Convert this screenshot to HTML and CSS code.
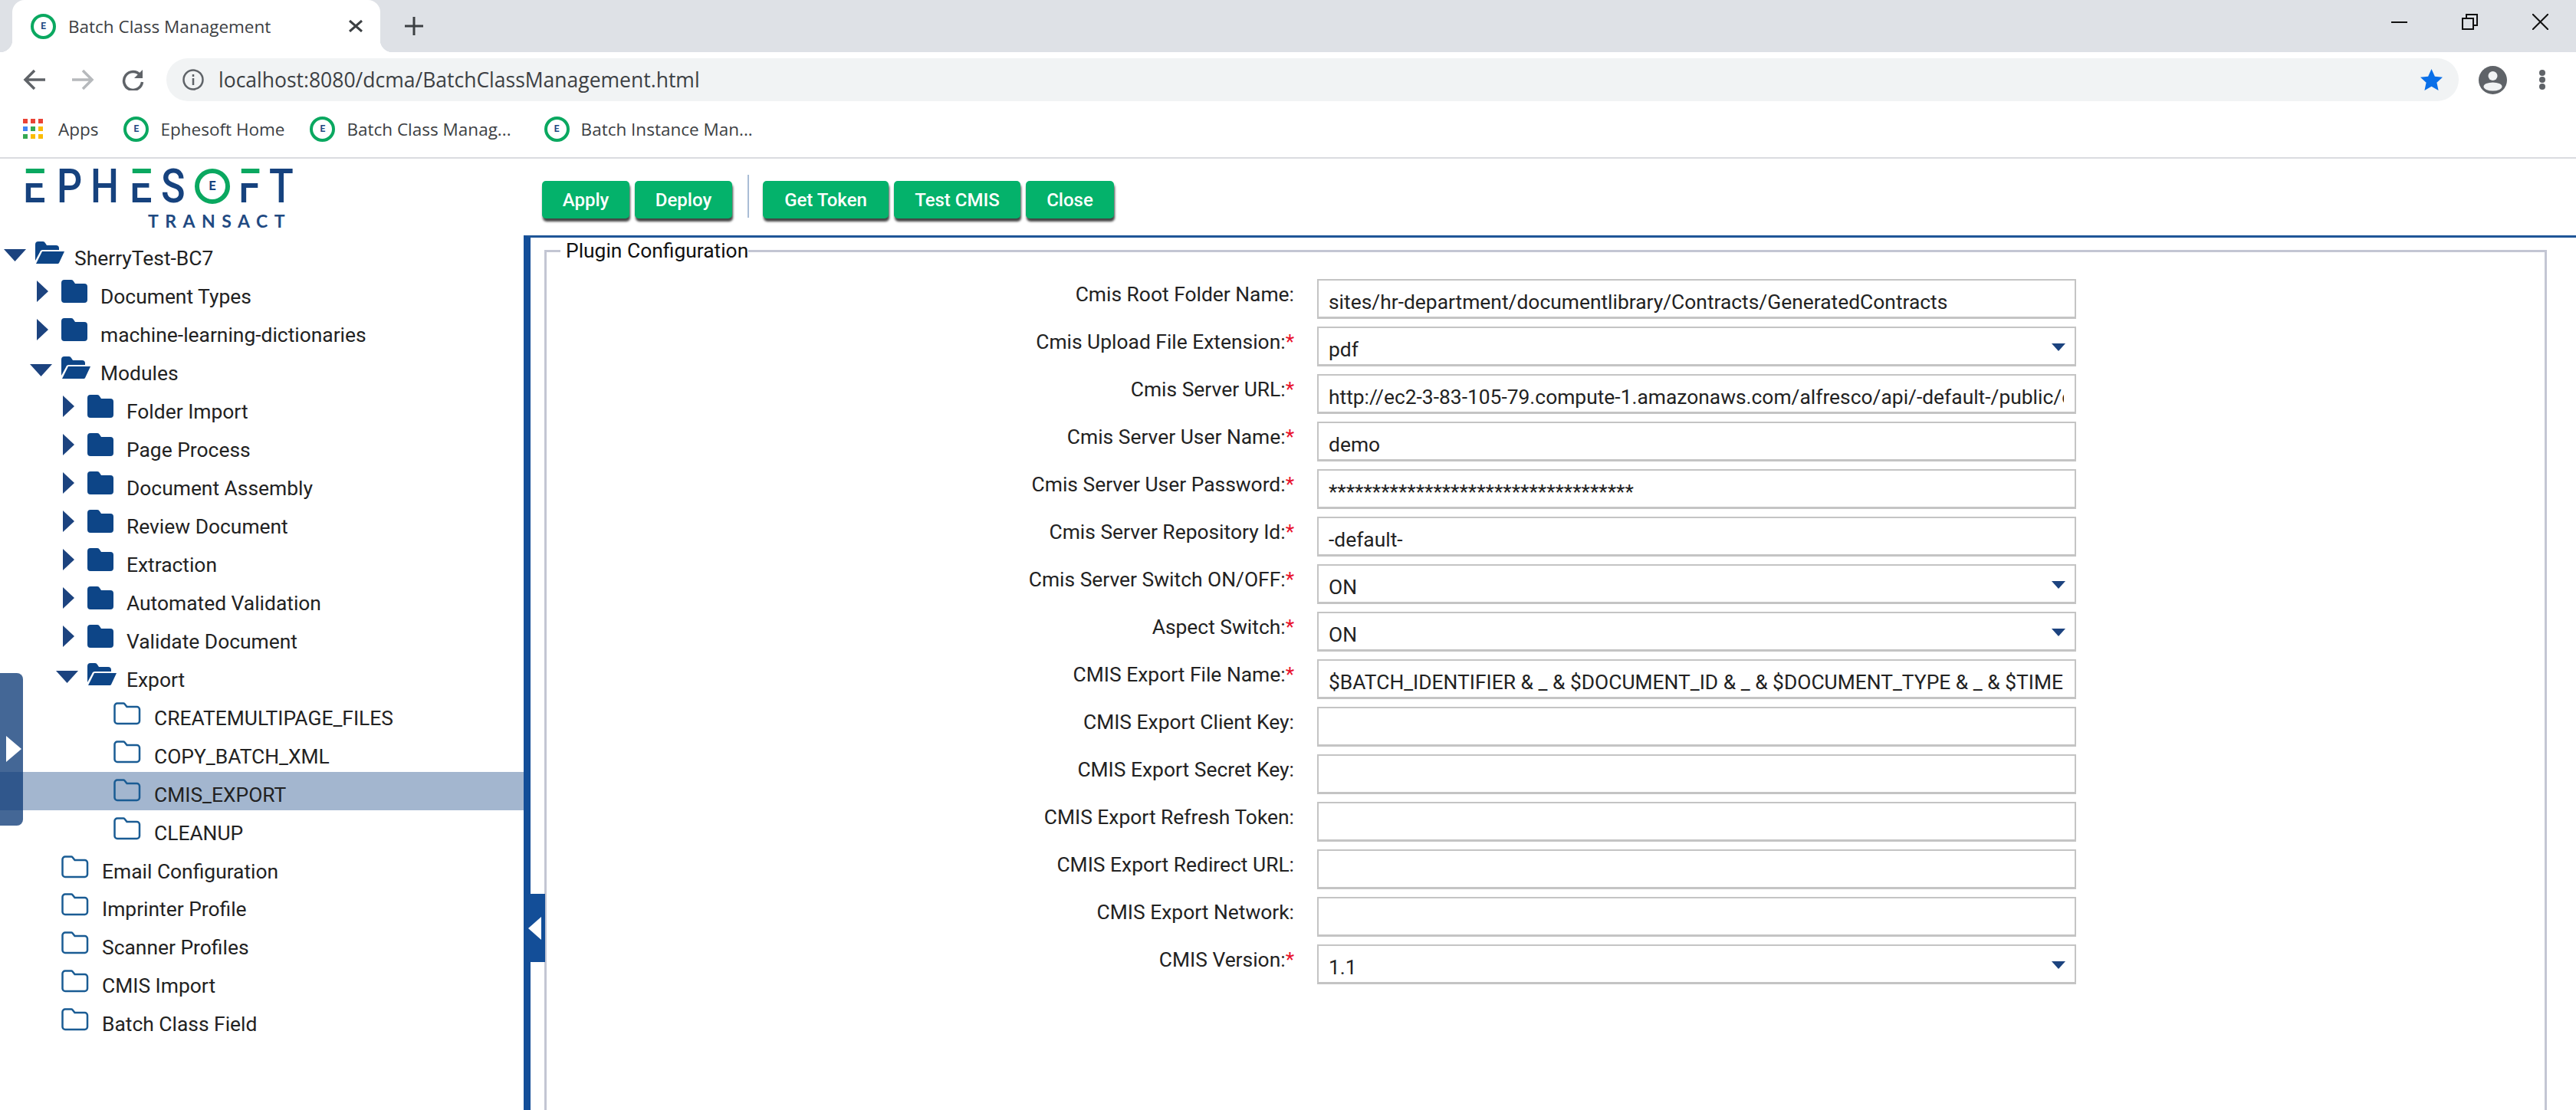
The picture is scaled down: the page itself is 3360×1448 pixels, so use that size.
FILE: index.html
```html
<!DOCTYPE html>
<html lang="en">
<head>
    <meta charset="UTF-8">
    <title>Batch Class Management</title>
    <link rel="stylesheet" href="styles.css">
</head>
<body>
    <svg class="defs" width="0" height="0">
        <symbol id="folder" viewBox="0 0 34 30"><path d="M4 0h9a4 4 0 0 1 3 2l2 3h12a4 4 0 0 1 4 4v17a4 4 0 0 1-4 4H4a4 4 0 0 1-4-4V4a4 4 0 0 1 4-4z"/></symbol>
        <symbol id="folder-open" viewBox="0 0 38 30"><path d="M0 25V4a4 4 0 0 1 4-4h6a4 4 0 0 1 3 2l2 3h12a4 4 0 0 1 4 4v2H10a4 4 0 0 0-4 3z"/><path d="M9 13h29l-7 15a2 2 0 0 1-2 1H1z"/></symbol>
        <symbol id="folder-line" viewBox="0 0 36 30"><path d="M5 1.5h8a2 2 0 0 1 1.500.7l3 3.800h13a3.500 3.500 0 0 1 3.500 3.500v15a3.500 3.500 0 0 1-3.500 3.500H5a3.500 3.500 0 0 1-3.500-3.500V5A3.500 3.500 0 0 1 5 1.500z"/></symbol>
        <symbol id="caret-right" viewBox="0 0 15 28"><path d="M0 0l15 14L0 28z"/></symbol>
        <symbol id="caret-down" viewBox="0 0 29 16"><path d="M0 0h29L14.500 16z"/></symbol>
    </svg>

    <!-- browser chrome -->
    <div class="tabstrip">
        <div class="tab">
            <span class="favicon">E</span>
            <span class="tab-title">Batch Class Management</span>
            <svg class="tab-close" width="18" height="16" viewBox="0 0 18 16"><path d="M1 1l16 14M17 1L1 15"/></svg>
        </div>
        <svg class="new-tab" width="24" height="24" viewBox="0 0 24 24"><path d="M12 0v24M0 12h24"/></svg>
        <div class="window-controls">
            <svg width="21" height="21" viewBox="0 0 21 21"><path d="M0 11h21"/></svg>
            <svg width="21" height="21" viewBox="0 0 21 21"><path d="M1 6h14v14H1zM6 6V1h14v14h-5"/></svg>
            <svg width="21" height="21" viewBox="0 0 21 21"><path d="M0 0l21 21M21 0L0 21"/></svg>
        </div>
    </div>

    <div class="toolbar">
        <svg class="nav-icon" width="29" height="28" viewBox="0 0 29 28"><path d="M29 14H4M15 2L3 14l12 12"/></svg>
        <svg class="nav-icon is-off" width="29" height="28" viewBox="0 0 29 28"><path d="M0 14h25M14 2l12 12-12 12"/></svg>
        <svg class="nav-icon" width="29" height="28" viewBox="0 0 29 28"><path d="M24 8a12 12 0 1 0 2.500 9"/><path class="solid" d="M27 1v11H16z"/></svg>
        <div class="omnibox">
            <svg class="info-icon" width="28" height="28" viewBox="0 0 28 28"><circle cx="14" cy="14" r="12.500"/><path d="M14 12v9M14 7v3"/></svg>
            <span class="url">localhost:8080/dcma/BatchClassManagement.html</span>
            <svg class="star-icon" width="29" height="28" viewBox="0 0 29 28"><path d="M14.500 0l4.400 9.800 10.100 1-7.600 7 2.200 10.200-9.100-5.300L5.400 28l2.200-10.200L0 10.800l10.100-1z"/></svg>
        </div>
        <svg class="avatar" width="37" height="37" viewBox="0 0 37 37"><circle cx="18.500" cy="18.500" r="18.500"/><circle class="hole" cx="18.500" cy="13" r="6"/><ellipse class="hole" cx="18.500" cy="27" rx="12" ry="5.500"/></svg>
        <div class="dots"><i></i><i></i><i></i></div>
    </div>

    <div class="bookmarks">
        <div class="bookmark apps">
            <svg width="27" height="27" viewBox="0 0 27 27">
                <rect width="6" height="6" fill="#ea4335"/><rect x="10" width="6" height="6" fill="#ea4335"/><rect x="20" width="6" height="6" fill="#ea4335"/>
                <rect y="10" width="6" height="6" fill="#4285f4"/><rect x="10" y="10" width="6" height="6" fill="#34a853"/><rect x="20" y="10" width="6" height="6" fill="#fbbc05"/>
                <rect y="20" width="6" height="6" fill="#34a853"/><rect x="10" y="20" width="6" height="6" fill="#fbbc05"/><rect x="20" y="20" width="6" height="6" fill="#fbbc05"/>
            </svg>
            <span>Apps</span>
        </div>
        <div class="bookmark"><span class="favicon">E</span><span>Ephesoft Home</span></div>
        <div class="bookmark"><span class="favicon">E</span><span>Batch Class Manag...</span></div>
        <div class="bookmark"><span class="favicon">E</span><span>Batch Instance Man...</span></div>
    </div>

    <!-- application -->
    <div class="app">
        <aside class="sidebar">
            <div class="logo">
                <div class="logo-word">
                    <span class="two-tone">E</span><span>P</span><span>H</span><span class="two-tone">E</span><span>S</span><span class="logo-ring">E</span><span class="two-tone">F</span><span>T</span>
                </div>
                <div class="logo-sub">TRANSACT</div>
            </div>
            <ul class="tree">
                <li class="node l0"><svg class="caret down"><use href="#caret-down"/></svg><svg class="ficon open"><use href="#folder-open"/></svg><span>SherryTest-BC7</span></li>
                <li class="node l1"><svg class="caret"><use href="#caret-right"/></svg><svg class="ficon"><use href="#folder"/></svg><span>Document Types</span></li>
                <li class="node l1"><svg class="caret"><use href="#caret-right"/></svg><svg class="ficon"><use href="#folder"/></svg><span>machine-learning-dictionaries</span></li>
                <li class="node l1"><svg class="caret down"><use href="#caret-down"/></svg><svg class="ficon open"><use href="#folder-open"/></svg><span>Modules</span></li>
                <li class="node l2"><svg class="caret"><use href="#caret-right"/></svg><svg class="ficon"><use href="#folder"/></svg><span>Folder Import</span></li>
                <li class="node l2"><svg class="caret"><use href="#caret-right"/></svg><svg class="ficon"><use href="#folder"/></svg><span>Page Process</span></li>
                <li class="node l2"><svg class="caret"><use href="#caret-right"/></svg><svg class="ficon"><use href="#folder"/></svg><span>Document Assembly</span></li>
                <li class="node l2"><svg class="caret"><use href="#caret-right"/></svg><svg class="ficon"><use href="#folder"/></svg><span>Review Document</span></li>
                <li class="node l2"><svg class="caret"><use href="#caret-right"/></svg><svg class="ficon"><use href="#folder"/></svg><span>Extraction</span></li>
                <li class="node l2"><svg class="caret"><use href="#caret-right"/></svg><svg class="ficon"><use href="#folder"/></svg><span>Automated Validation</span></li>
                <li class="node l2"><svg class="caret"><use href="#caret-right"/></svg><svg class="ficon"><use href="#folder"/></svg><span>Validate Document</span></li>
                <li class="node l2"><svg class="caret down"><use href="#caret-down"/></svg><svg class="ficon open"><use href="#folder-open"/></svg><span>Export</span></li>
                <li class="node l3"><svg class="ficon leaf"><use href="#folder-line"/></svg><span>CREATEMULTIPAGE_FILES</span></li>
                <li class="node l3"><svg class="ficon leaf"><use href="#folder-line"/></svg><span>COPY_BATCH_XML</span></li>
                <li class="node l3 selected"><svg class="ficon leaf"><use href="#folder-line"/></svg><span>CMIS_EXPORT</span></li>
                <li class="node l3"><svg class="ficon leaf"><use href="#folder-line"/></svg><span>CLEANUP</span></li>
                <li class="node l1"><svg class="ficon leaf"><use href="#folder-line"/></svg><span>Email Configuration</span></li>
                <li class="node l1"><svg class="ficon leaf"><use href="#folder-line"/></svg><span>Imprinter Profile</span></li>
                <li class="node l1"><svg class="ficon leaf"><use href="#folder-line"/></svg><span>Scanner Profiles</span></li>
                <li class="node l1"><svg class="ficon leaf"><use href="#folder-line"/></svg><span>CMIS Import</span></li>
                <li class="node l1"><svg class="ficon leaf"><use href="#folder-line"/></svg><span>Batch Class Field</span></li>
            </ul>
            <div class="side-handle"><i></i></div>
        </aside>

        <main class="main">
            <div class="actions">
                <button class="btn-apply">Apply</button>
                <button class="btn-deploy">Deploy</button>
                <span class="separator"></span>
                <button class="btn-token">Get Token</button>
                <button class="btn-test">Test CMIS</button>
                <button class="btn-close">Close</button>
            </div>
            <div class="content">
                <div class="collapse-handle"><i></i></div>
                <fieldset class="config">
                    <legend>Plugin Configuration</legend>
                    <form class="config-form">
                        <label>Cmis Root Folder Name:</label>
                        <input type="text" value="sites/hr-department/documentlibrary/Contracts/GeneratedContracts">

                        <label>Cmis Upload File Extension:<b>*</b></label>
                        <div class="select"><select><option>pdf</option></select></div>

                        <label>Cmis Server URL:<b>*</b></label>
                        <input type="text" value="http://ec2-3-83-105-79.compute-1.amazonaws.com/alfresco/api/-default-/public/cmis/versions/1.1/atom">

                        <label>Cmis Server User Name:<b>*</b></label>
                        <input type="text" value="demo">

                        <label>Cmis Server User Password:<b>*</b></label>
                        <input type="text" value="***********************************">

                        <label>Cmis Server Repository Id:<b>*</b></label>
                        <input type="text" value="-default-">

                        <label>Cmis Server Switch ON/OFF:<b>*</b></label>
                        <div class="select"><select><option>ON</option></select></div>

                        <label>Aspect Switch:<b>*</b></label>
                        <div class="select"><select><option>ON</option></select></div>

                        <label>CMIS Export File Name:<b>*</b></label>
                        <input type="text" value="$BATCH_IDENTIFIER &amp; _ &amp; $DOCUMENT_ID &amp; _ &amp; $DOCUMENT_TYPE &amp; _ &amp; $TIME">

                        <label>CMIS Export Client Key:</label>
                        <input type="text">

                        <label>CMIS Export Secret Key:</label>
                        <input type="text">

                        <label>CMIS Export Refresh Token:</label>
                        <input type="text">

                        <label>CMIS Export Redirect URL:</label>
                        <input type="text">

                        <label>CMIS Export Network:</label>
                        <input type="text">

                        <label>CMIS Version:<b>*</b></label>
                        <div class="select"><select><option>1.1</option></select></div>
                    </form>
                </fieldset>
            </div>
        </main>
    </div>
</body>
</html>
```

FILE: styles.css
```css
* { box-sizing: border-box; }
html, body { margin: 0; height: 100%; }
body { width: 3360px; height: 1448px; overflow: hidden; background: white; color: #222; font-family: Roboto, "Liberation Sans", sans-serif; font-size: 26.4px; }
.defs { position: absolute; }

/* browser chrome */
.tabstrip { display: flex; align-items: center; height: 68px; padding-left: 16px; background: #dee1e6; }
.tab { position: relative; display: flex; align-items: center; align-self: stretch; width: 480px; padding: 0 23px 0 24px; background: white; border-radius: 16px 16px 0 0; }
.tab::before, .tab::after { content: ""; position: absolute; bottom: 0; width: 16px; height: 16px; }
.tab::before { right: 100%; background: radial-gradient(circle at 0 0, transparent 16px, white 16.5px); }
.tab::after { left: 100%; background: radial-gradient(circle at 100% 0, transparent 16px, white 16.5px); }
.favicon { display: flex; flex: none; align-items: center; justify-content: center; width: 33px; height: 33px; border: 4px solid #0aa860; border-radius: 50%; color: #1f4a82; font-family: Roboto, sans-serif; font-size: 12px; font-weight: 700; }
.tab-title { margin-left: 16px; color: #3c4043; font-family: "Open Sans", sans-serif; font-size: 22.5px; }
.tab-close { margin-left: auto; fill: none; stroke: #3c4043; stroke-width: 3; }
.new-tab { margin-left: 32px; fill: none; stroke: #3c4043; stroke-width: 3; }
.window-controls { display: flex; gap: 71px; margin-left: auto; padding-right: 36px; margin-top: -12px; }
.window-controls svg { fill: none; stroke: #111; stroke-width: 2; }

.toolbar { display: flex; align-items: center; height: 72px; padding: 0 40px 0 30px; }
.nav-icon { flex: none; margin-right: 35px; fill: none; stroke: #5f6368; stroke-width: 3.5; }
.nav-icon.is-off { stroke: #b6b9bc; margin-right: 36px; }
.nav-icon:nth-child(3) { margin-right: 29px; }
.nav-icon .solid { fill: #5f6368; stroke: none; }
.omnibox { display: flex; flex: 1; align-items: center; height: 56px; padding: 0 21px; background: #f1f3f4; border-radius: 28px; }
.info-icon { fill: none; stroke: #5f6368; stroke-width: 2.5; }
.url { margin-left: 19px; color: #3c4043; font-family: "Open Sans", sans-serif; font-size: 26.5px; }
.star-icon { margin-left: auto; fill: #0a6fe8; }
.avatar { flex: none; margin-left: 26px; fill: #5f6368; }
.avatar .hole { fill: #f1f3f4; }
.dots { display: flex; flex-direction: column; gap: 1px; margin-left: 42px; }
.dots i { width: 8px; height: 8px; background: #5f6368; border-radius: 50%; }

.bookmarks { display: flex; align-items: center; gap: 33px; height: 67px; padding: 0 0 9px 30px; border-bottom: 2px solid #dadce0; color: #3c4043; font-family: "Open Sans", sans-serif; font-size: 22.5px; }
.bookmark { display: flex; align-items: center; gap: 15px; }
.bookmark.apps { gap: 19px; }
.bookmark:nth-child(3) { margin-right: 10px; }

/* application */
.app { display: flex; height: 1241px; }
.sidebar { position: relative; flex: none; width: 683px; }
.logo { height: 100px; padding: 13px 0 0 30px; color: #16427e; }
.logo-word { display: flex; align-items: center; height: 45px; font-size: 62px; font-weight: 500; line-height: 45px; }
.logo-word span { display: block; flex: none; transform: scaleX(.84); transform-origin: left center; }
.logo-word span:nth-child(1), .logo-word span:nth-child(2) { width: 44px; }
.logo-word span:nth-child(3) { width: 51px; }
.logo-word span:nth-child(4) { width: 41px; }
.logo-word span:nth-child(5) { width: 44px; }
.logo-word span:nth-child(7) { width: 40px; }
.logo-word .two-tone { background: linear-gradient(#0aa860 0 14%, white 14% 42%, #16427e 42%); -webkit-background-clip: text; background-clip: text; color: transparent; }
.logo-word .logo-ring { display: flex; align-items: center; justify-content: center; width: 46px; height: 46px; margin-right: 11px; border: 6px solid #0aa860; border-radius: 50%; color: #16427e; font-size: 16px; font-weight: 700; line-height: 1; transform: none; }
.logo-sub { margin: 13px 0 0 163px; font-family: Lato, sans-serif; font-size: 23px; font-weight: 700; letter-spacing: 8.5px; line-height: 20px; color: #1f4a82; }

.tree { margin: 0; padding: 0; list-style: none; }
.node { display: flex; align-items: flex-start; height: 49.97px; padding-top: 8px; line-height: 44px; white-space: nowrap; }
.node.selected { background: #a3b6cf; }
.l0 { padding-left: 0; }
.l1 { padding-left: 34px; }
.l2 { padding-left: 68px; }
.l3 { padding-left: 102px; }
.caret { flex: none; width: 15px; height: 28px; margin: 1px 17px 0 14px; fill: #1c437f; }
.caret.down { width: 29px; height: 16px; margin: 10px 12px 0 5px; }
.ficon { flex: none; width: 34px; height: 30px; margin-right: 17px; fill: #0d4587; }
.ficon.open { width: 38px; margin-right: 13px; }
.ficon.leaf { width: 36px; height: 30px; margin: 1px 17px 0 46px; fill: none; stroke: #1a5c94; stroke-width: 2.5; }

.side-handle { position: absolute; left: 0; top: 671px; width: 30px; height: 199px; background: rgba(16, 60, 120, .78); border-radius: 0 8px 8px 0; }
.side-handle i { position: absolute; left: 8px; top: 82px; border-left: 20px solid white; border-top: 17px solid transparent; border-bottom: 17px solid transparent; }

.main { flex: 1; min-width: 0; }
.actions { display: flex; align-items: flex-start; gap: 7px; height: 100px; padding: 21px 0 0 24px; }
.actions button { height: 49px; margin-top: 8px; padding: 0; background: #04b26b; border: none; border-radius: 5px; box-shadow: 1px 4px 3px #444; color: white; font-family: Roboto, sans-serif; font-size: 24px; font-weight: 500; cursor: pointer; }
.btn-apply { width: 114px; }
.btn-deploy { width: 127px; }
.btn-token { width: 164px; }
.btn-test { width: 165px; }
.btn-close { width: 115px; }
.separator { width: 2px; height: 56px; margin: 0 11px 0 13px; background: #a9bdd6; }

.content { position: relative; height: 1141px; padding: 0 38px 0 18px; border-top: 3px solid #1f5597; border-left: 9px solid #134e98; }
.collapse-handle { position: absolute; left: -9px; top: 856px; width: 28px; height: 89px; background: #134e98; }
.collapse-handle i { position: absolute; left: 6px; top: 30px; border-right: 17px solid white; border-top: 15px solid transparent; border-bottom: 15px solid transparent; }
.config { height: 1200px; min-width: 0; margin: 1px 0 0; padding: 21px 0 0; border: 3px solid #c3c6d3; }
.config legend { margin-left: 18px; padding: 0 0 0 7px; line-height: 32px; color: #111; }
.config-form { display: grid; grid-template-columns: 975px 990px; column-gap: 30px; row-gap: 10px; grid-auto-rows: 52px; }
.config-form label { padding-top: 4px; line-height: 32px; text-align: right; color: #222; }
.config-form label b { color: #e8112d; font-weight: 400; }
.config-form input, .config-form select { display: block; width: 100%; height: 52px; padding: 8px 14px 0 13px; background: white; border: 2px solid #c4c4c4; border-bottom-width: 3px; border-radius: 0; outline: none; color: #222; font-family: Roboto, sans-serif; font-size: 26.4px; appearance: none; }
.select { position: relative; }
.select::after { content: ""; position: absolute; right: 14px; top: 22px; border-top: 10px solid #1c437f; border-left: 9px solid transparent; border-right: 9px solid transparent; }
```
